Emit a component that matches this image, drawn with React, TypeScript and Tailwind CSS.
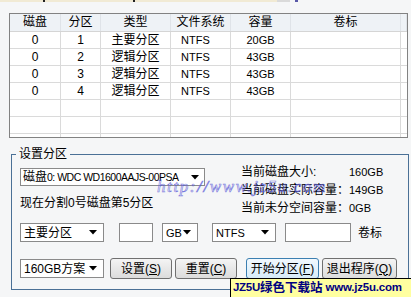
import React from "react";

const FONT = "font-['Liberation_Sans','Noto_Sans_CJK_SC',sans-serif]";

interface PartRow {
  disk: string;
  part: string;
  type: string;
  fs: string;
  size: string;
}

const rows: PartRow[] = [
  { disk: "0", part: "1", type: "主要分区", fs: "NTFS", size: "20GB" },
  { disk: "0", part: "2", type: "逻辑分区", fs: "NTFS", size: "43GB" },
  { disk: "0", part: "3", type: "逻辑分区", fs: "NTFS", size: "43GB" },
  { disk: "0", part: "4", type: "逻辑分区", fs: "NTFS", size: "43GB" },
  { disk: "", part: "", type: "", fs: "", size: "" },
  { disk: "", part: "", type: "", fs: "", size: "" },
  { disk: "", part: "", type: "", fs: "", size: "" },
];

const cols = "grid grid-cols-[51px_40px_70px_60px_60px_110px_1fr]";

function Arrow() {
  return (
    <svg width="8" height="5" viewBox="0 0 8 5" className="shrink-0">
      <polygon points="0,0 8,0 4,4.5" fill="#000" />
    </svg>
  );
}

function Combo({ label, width }: { label: React.ReactNode; width: string }) {
  return (
    <div
      className={`${width} h-[19px] flex items-center justify-between border border-[#8a8a8a] bg-white pl-[3px] pr-[6px] text-[12px] leading-none`}
    >
      <span className="whitespace-nowrap">{label}</span>
      <Arrow />
    </div>
  );
}

function Btn({
  text,
  hot,
  width,
  focused,
}: {
  text: string;
  hot: string;
  width: string;
  focused?: boolean;
}) {
  return (
    <div
      className={`${width} h-[21px] flex items-center justify-center rounded-[3px] border text-[12px] leading-none ${
        focused
          ? "border-[#3c7fb1] bg-gradient-to-b from-[#f2f9fe] to-[#d6ebf8]"
          : "border-[#707070] bg-gradient-to-b from-[#f4f4f4] to-[#dcdcdc]"
      }`}
    >
      {text}(<span className="underline">{hot}</span>)
    </div>
  );
}

export default function App() {
  return (
    <div className={`relative w-[411px] h-[297px] overflow-hidden bg-[#f5f6f7] text-black ${FONT}`}>
      {/* top strip */}
      <div className="flex h-[2px]">
        <div className="w-[277px] bg-[#f1ead4] flex">
          <div className="ml-[43px] w-[2px] bg-[#222]" />
          <div className="ml-[88px] w-[2px] bg-[#222]" />
        </div>
        <div className="w-[13px] bg-[#dadada]" />
        <div className="ml-[5px] w-[3px] bg-[#5858a8]" />
      </div>

      {/* partition list */}
      <div className="ml-[9px] mt-[11px] w-[399px] h-[125px] overflow-hidden border border-[#828282] bg-white">
        <div className={`${cols} h-[18px] bg-[#eef2f6] border-b border-[#d5d5d5] text-[12px] leading-[17px]`}>
          {["磁盘", "分区", "类型", "文件系统", "容量", "卷标", ""].map((h, i) => (
            <div key={i} className="text-center border-r border-[#dfe3e8]">
              {h}
            </div>
          ))}
        </div>
        {rows.map((r, i) => (
          <div key={i} className={`${cols} h-[17px] text-[12px] leading-[16px]`}>
            <div className="text-center border-r border-b border-[#dadada]">{r.disk}</div>
            <div className="text-center border-r border-b border-[#dadada]">{r.part}</div>
            <div className="text-center border-r border-b border-[#dadada]">{r.type}</div>
            <div className="pl-[10px] border-r border-b border-[#dadada] text-[11px]">{r.fs}</div>
            <div className="text-center border-r border-b border-[#dadada] text-[11px]">{r.size}</div>
            <div className="border-r border-b border-[#dadada]" />
            <div className="border-b border-[#dadada]" />
          </div>
        ))}
      </div>

      {/* settings group */}
      <fieldset className="ml-[11px] mt-[8px] w-[398px] border border-[#4a7096] px-0 pb-[10px]">
        <legend className="ml-[4px] px-[3px] text-[12px] leading-[16px]">设置分区</legend>
        <div className="flex pt-[1px]">
          <div className="w-[229px] pl-[8px]">
            <div className="mt-[5px] w-[185px] h-[18px] flex items-center justify-between border border-[#8a8a8a] bg-white pl-[2px] pr-[5px] leading-none">
              <span className="whitespace-nowrap text-[12px]">
                磁盘<span className="text-[10.5px] tracking-[-0.5px]">0: WDC WD1600AAJS-00PSA</span>
              </span>
              <Arrow />
            </div>
            <div className="mt-[8px] text-[12px] leading-[18px]">现在分割0号磁盘第5分区</div>
          </div>
          <div className="grid grid-cols-[108px_1fr] text-[12px] leading-[18px]">
            <div>当前磁盘大小:</div>
            <div className="text-[11px]">160GB</div>
            <div>当前磁盘实际容量：</div>
            <div className="text-[11px]">149GB</div>
            <div>当前未分空间容量：</div>
            <div className="text-[11px]">0GB</div>
          </div>
        </div>

        <div className="flex items-center mt-[6px] pl-[8px]">
          <Combo label="主要分区" width="w-[84px]" />
          <div className="ml-[15px] w-[34px] h-[19px] border border-[#8a8a8a] bg-white" />
          <div className="ml-[9px]">
            <Combo label={<span className="text-[11px]">GB</span>} width="w-[36px]" />
          </div>
          <div className="ml-[14px]">
            <Combo label={<span className="text-[11px]">NTFS</span>} width="w-[64px]" />
          </div>
          <div className="ml-[9px] w-[66px] h-[19px] border border-[#8a8a8a] bg-white" />
          <div className="ml-[7px] text-[12px]">卷标</div>
        </div>

        <div className="flex items-center mt-[16px] pl-[8px]">
          <Combo label="160GB方案" width="w-[84px]" />
          <div className="ml-[6px]">
            <Btn text="设置" hot="S" width="w-[62px]" />
          </div>
          <div className="ml-[3px]">
            <Btn text="重置" hot="C" width="w-[62px]" />
          </div>
          <div className="ml-[9px]">
            <Btn text="开始分区" hot="F" width="w-[73px]" focused />
          </div>
          <div className="ml-[3px]">
            <Btn text="退出程序" hot="Q" width="w-[75px]" />
          </div>
        </div>
      </fieldset>

      {/* site watermarks */}
      <div className="absolute left-[157px] top-[174px] font-['Liberation_Serif',serif] italic text-[17px] tracking-[1.6px] text-transparent [-webkit-text-stroke:0.6px_#5a5ad8] opacity-80 pointer-events-none">
        http://www.jz5u.com
      </div>
      <div className="absolute left-[230px] top-[278px] w-[181px] h-[19px] bg-[#ffffa0] border-t border-l border-black flex items-center pl-[2px] font-bold leading-none text-[#000080] whitespace-nowrap">
        <span className="text-[11.5px] tracking-[-0.3px]">JZ5U</span>
        <span className="text-[12.5px]">绿色下载站</span>
        <span className="ml-[3px] text-[11.5px] tracking-[-0.2px]">www.jz5u.com</span>
      </div>
    </div>
  );
}
